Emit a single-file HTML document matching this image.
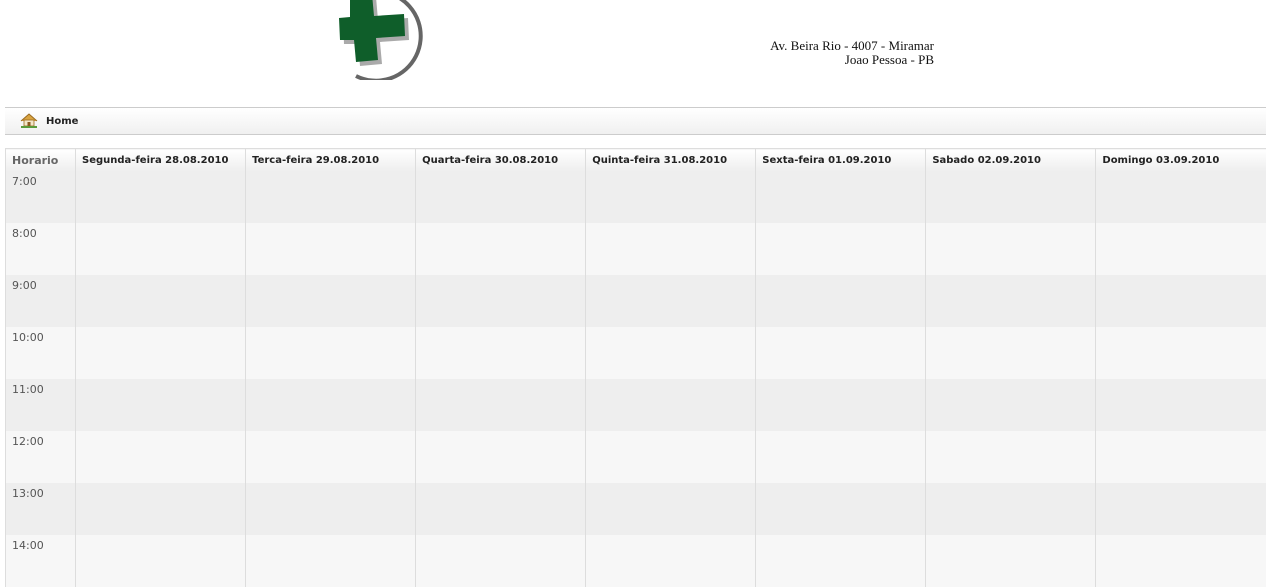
<!DOCTYPE html>
<html><head><style>
body{margin:0;width:1266px;height:578px;overflow:hidden;background:#fff;font-family:"DejaVu Sans",Verdana,sans-serif;position:relative}
.addr{position:absolute;left:734px;top:39px;font-family:"Liberation Serif",serif;font-size:13px;line-height:14px;color:#111;text-align:right;width:200px}
.nav{position:absolute;left:5px;top:107px;width:1261px;height:26px;border-top:1px solid #ccc;border-bottom:1px solid #ccc;background:linear-gradient(#fff,#f0f0f0)}
.nav span{position:absolute;left:41px;top:8px;font-size:10px;font-weight:bold;color:#222}
table{position:absolute;left:5px;top:148px;border-collapse:collapse;width:1261px;table-layout:fixed}
td,th{border-left:1px solid #ddd;padding:0;vertical-align:top;text-align:left}
th{height:21px;font-size:10px;font-weight:bold;color:#222;padding-left:6px;background:linear-gradient(#fff,#eee);border-top:1px solid #ddd;line-height:21px;padding-top:1px;box-sizing:border-box;overflow:hidden;white-space:nowrap}
th.h{font-size:11px;color:#666;padding-left:6px}
td{height:47px;padding-top:5px;font-size:11px;color:#555;padding-left:6px;line-height:12px}
tr.a td{background:#eee}tr.b td{background:#f7f7f7}
</style></head><body>
<svg style="position:absolute;left:332px;top:0" width="100" height="80" viewBox="0 0 100 80">
<path d="M64 -4 A40 40 0 0 1 24 76" stroke="#666" stroke-width="4" fill="none"/>
<polygon points="22,-3 44,-3 46,20 76,18 77,40 48,42 50,64 28,66 26,44 12,44 11,22 22,21" fill="#aaa"/>
<polygon points="18,-6 40,-6 42,16 72,14 73,36 44,38 46,60 24,62 22,40 8,40 7,18 18,17" fill="#0f5e2a"/>
</svg>
<div class="addr">Av. Beira Rio - 4007 - Miramar<br>Joao Pessoa - PB</div>
<div class="nav">
<svg style="position:absolute;left:15px;top:5px" width="18" height="15" viewBox="0 0 18 15"><path d="M1 8 L9 1 L17 8" fill="#d9a441" stroke="#9a6a20"/><rect x="4" y="7" width="10" height="6" fill="#f3e6c8" stroke="#9a6a20" stroke-width=".8"/><rect x="7.5" y="9" width="3" height="4" fill="#8a5a20"/><rect x="1" y="13" width="16" height="2" fill="#5a9a3a"/></svg>
<span>Home</span></div>
<table>
<colgroup><col style="width:70px"><col span="7" style="width:170px"></colgroup>
<tr><th class="h">Horario</th><th>Segunda-feira 28.08.2010</th><th>Terca-feira 29.08.2010</th><th>Quarta-feira 30.08.2010</th><th>Quinta-feira 31.08.2010</th><th>Sexta-feira 01.09.2010</th><th>Sabado 02.09.2010</th><th>Domingo 03.09.2010</th></tr>
<tr class="a"><td>7:00</td><td></td><td></td><td></td><td></td><td></td><td></td><td></td></tr>
<tr class="b"><td>8:00</td><td></td><td></td><td></td><td></td><td></td><td></td><td></td></tr>
<tr class="a"><td>9:00</td><td></td><td></td><td></td><td></td><td></td><td></td><td></td></tr>
<tr class="b"><td>10:00</td><td></td><td></td><td></td><td></td><td></td><td></td><td></td></tr>
<tr class="a"><td>11:00</td><td></td><td></td><td></td><td></td><td></td><td></td><td></td></tr>
<tr class="b"><td>12:00</td><td></td><td></td><td></td><td></td><td></td><td></td><td></td></tr>
<tr class="a"><td>13:00</td><td></td><td></td><td></td><td></td><td></td><td></td><td></td></tr>
<tr class="b"><td>14:00</td><td></td><td></td><td></td><td></td><td></td><td></td><td></td></tr>
</table>
</body></html>
